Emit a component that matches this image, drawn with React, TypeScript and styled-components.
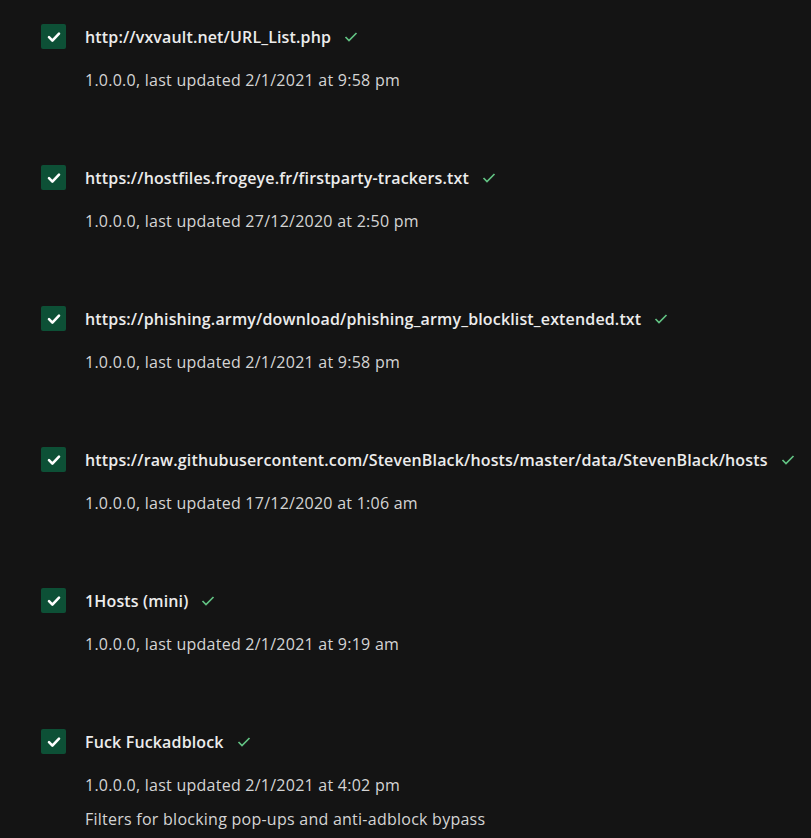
import React from "react";
import styled, { createGlobalStyle } from "styled-components";

const Global = createGlobalStyle`
  html, body { margin: 0; padding: 0; background: #141414; }
  body { font-family: "Segoe UI", "Open Sans", "Noto Sans", sans-serif; color: #e6e6e6; }
`;

const List = styled.div`
  display: flex;
  flex-direction: column;
  gap: 75px;
  padding: 24px 0 0 41px;
`;

const Item = styled.div`
  display: grid;
  grid-template-columns: 25px 1fr;
  column-gap: 19px;
`;

const Box = styled.div`
  width: 25px;
  height: 25px;
  border-radius: 2px;
  background: #0d5036;
  display: flex;
  align-items: center;
  justify-content: center;
`;

const TitleRow = styled.div`
  display: flex;
  align-items: center;
  gap: 13px;
  height: 25px;
`;

const Title = styled.span`
  font-size: 16px;
  font-weight: 600;
  color: #ececec;
  white-space: nowrap;
  letter-spacing: 0.15px;
`;

const Body = styled.div`
  grid-column: 2;
  display: flex;
  flex-direction: column;
`;

const Meta = styled.div`
  margin-top: 21px;
  font-size: 16px;
  line-height: 20px;
  color: #d4d4d4;
  letter-spacing: 0.25px;
`;

const Desc = styled.div`
  margin-top: 14px;
  font-size: 16px;
  line-height: 20px;
  color: #d4d4d4;
  letter-spacing: 0.25px;
`;

const CheckMark = () => (
  <svg width="14" height="12" viewBox="0 0 14 12">
    <path d="M2 6.2 L5.4 9.6 L12 2.6" fill="none" stroke="#ffffff" strokeWidth="2.6" strokeLinecap="round" strokeLinejoin="round" />
  </svg>
);

const SmallCheck = () => (
  <svg width="14" height="12" viewBox="0 0 14 12">
    <path d="M1.5 6 L5 9.5 L12.5 2" fill="none" stroke="#62c283" strokeWidth="1.7" />
  </svg>
);

const items = [
  { title: "http://vxvault.net/URL_List.php", meta: "1.0.0.0, last updated 2/1/2021 at 9:58 pm" },
  { title: "https://hostfiles.frogeye.fr/firstparty-trackers.txt", meta: "1.0.0.0, last updated 27/12/2020 at 2:50 pm" },
  { title: "https://phishing.army/download/phishing_army_blocklist_extended.txt", meta: "1.0.0.0, last updated 2/1/2021 at 9:58 pm" },
  { title: "https://raw.githubusercontent.com/StevenBlack/hosts/master/data/StevenBlack/hosts", meta: "1.0.0.0, last updated 17/12/2020 at 1:06 am" },
  { title: "1Hosts (mini)", meta: "1.0.0.0, last updated 2/1/2021 at 9:19 am" },
  { title: "Fuck Fuckadblock", meta: "1.0.0.0, last updated 2/1/2021 at 4:02 pm", desc: "Filters for blocking pop-ups and anti-adblock bypass" },
];

export default function App() {
  return (
    <>
      <Global />
      <List>
        {items.map((it) => (
          <Item key={it.title}>
            <Box><CheckMark /></Box>
            <TitleRow>
              <Title>{it.title}</Title>
              <SmallCheck />
            </TitleRow>
            <Body>
              <Meta>{it.meta}</Meta>
              {it.desc && <Desc>{it.desc}</Desc>}
            </Body>
          </Item>
        ))}
      </List>
    </>
  );
}
